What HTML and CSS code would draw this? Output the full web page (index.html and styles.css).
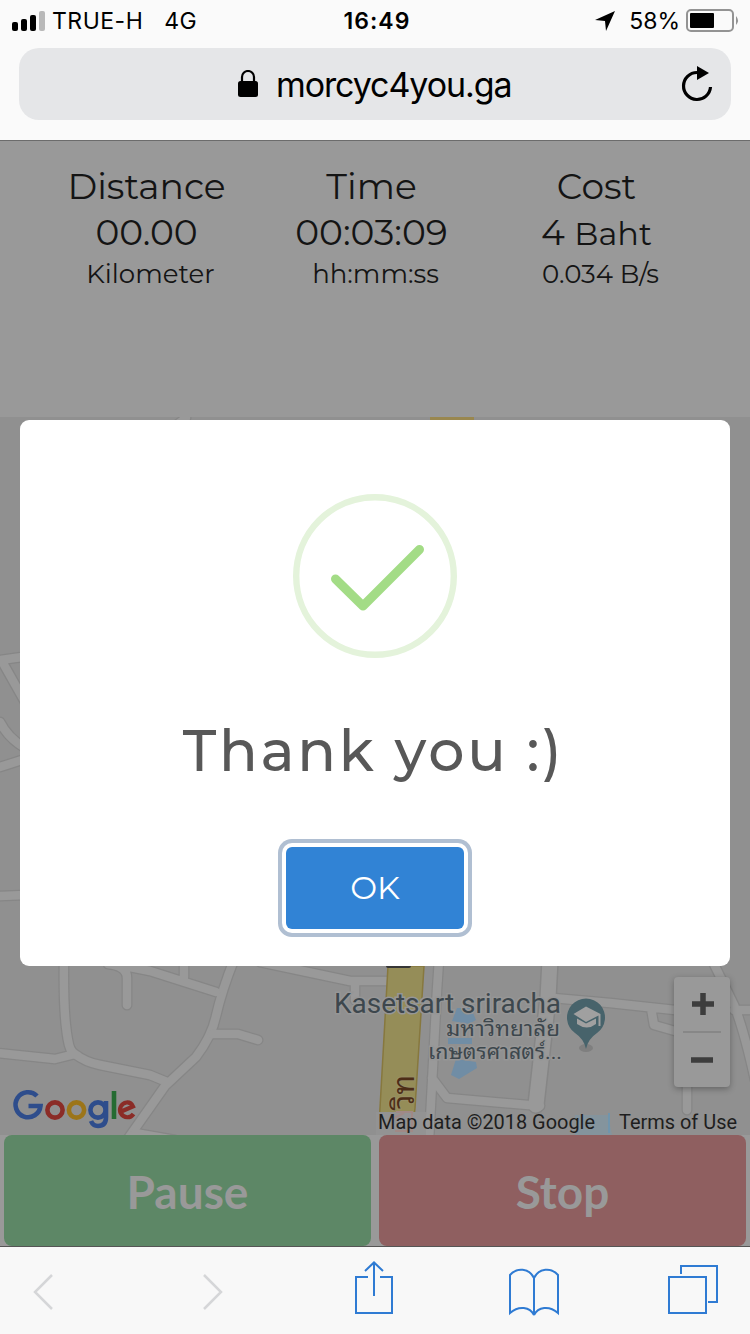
FILE: index.html
```html
<!DOCTYPE html>
<html lang="en">
<head>
<meta charset="utf-8">
<title>morcyc4you.ga</title>
<link rel="stylesheet" href="styles.css">
</head>
<body>
<div class="phone">
  <header class="chrome">
    <div class="status">
      <div class="status-left">
        <svg class="signal" width="34" height="20" viewBox="0 0 34 20"><rect x="0" y="11" width="6" height="9" rx="2"/><rect x="9" y="8" width="6" height="12" rx="2"/><rect x="18" y="4" width="6" height="16" rx="2"/><rect x="27" y="0" width="6" height="20" rx="2" fill="#b9b9b9"/></svg>
        <span class="carrier">TRUE-H</span><span class="network">4G</span>
      </div>
      <div class="clock">16:49</div>
      <div class="status-right">
        <svg width="20" height="20" viewBox="0 0 20 20"><path d="M20 0 11 20 10 10 0 9Z"/></svg>
        <span class="percent">58%</span>
        <svg width="54" height="24" viewBox="0 0 54 24"><rect x="1" y="1" width="46" height="21" rx="4" fill="none" stroke="#939393" stroke-width="2"/><rect x="4" y="4" width="24" height="15" rx="1"/><path d="M50 7q4 4.500 0 9z" fill="#939393"/></svg>
      </div>
    </div>
    <div class="address">
      <svg class="lock" width="20" height="28" viewBox="0 0 20 28"><rect y="11" width="20" height="16" rx="2.500"/><path d="M4 12V7a6 6 0 0 1 12 0v5" fill="none" stroke="#000" stroke-width="2.200"/></svg>
      <span class="host">morcyc4you.ga</span>
      <svg class="reload" width="32" height="36" viewBox="0 0 32 36"><path d="M16 6.500A13.500 13.500 0 1 0 29.500 21" fill="none" stroke="#000" stroke-width="3.200"/><path d="M16 0v14l12-7z"/></svg>
    </div>
  </header>

  <main class="page">
    <section class="stats">
      <div class="stat"><div class="big nudge">Distance</div><div class="big nudge">00.00</div><div class="small">Kilometer</div></div>
      <div class="stat"><div class="big nudge">Time</div><div class="big nudge">00:03:09</div><div class="small">hh:mm:ss</div></div>
      <div class="stat"><div class="big nudge">Cost</div><div class="big nudge">4 <span class="unit">Baht</span></div><div class="small">0.034 B/s</div></div>
    </section>

    <section class="map">
      <svg class="map-canvas" width="750" height="718" viewBox="0 417 750 718">
        <rect y="417" width="750" height="718" fill="#909090"/>
        <defs>
          <g id="roads">
            <path d="M0 660 22 657M3 663 25 702M0 722Q8 738 25 748M0 767 25 759M0 896 25 895M178 424 186 418"/>
            <path d="M64 960Q63 1020 69 1045Q71 1053 78 1056M-2 1053 55 1059 75 1054Q85 1062 100 1065L150 1075 167 1082"/>
            <path d="M234 960Q222 990 216 1016 212 1036 196 1057L165 1086 127 1140"/>
            <path d="M125 966 150 971 216 992M108 964Q127 966 127 978V1005M184 960V977M212 1034H238L258 1040M260 962 350 981H388M355 983V1000M135 1133 175 1140"/>
            <path d="M439 960 437 990 429 1140M432 1078 447 1098 540 1106M553 998 610 1003 675 1010M651 1008 654 1025 675 1031M712 960 734 1005Q744 1030 755 1080M734 1010H755M687 1080V1110"/>
          </g>
          <path id="wide-road" d="M550 960 548 998 536 1105"/>
        </defs>
        <g fill="none" stroke-linecap="round" stroke-linejoin="round">
          <use href="#roads" stroke="#868686" stroke-width="11"/>
          <use href="#wide-road" stroke="#868686" stroke-width="18"/>
          <use href="#roads" stroke="#999" stroke-width="8.500"/>
          <use href="#wide-road" stroke="#999" stroke-width="15"/>
        </g>
        <path d="M430 417h44v4h-44z" fill="#99874f"/>
        <path d="M388 966H424L415 1108 412 1135H378L380 1108Z" fill="#958d58" stroke="#87783e" stroke-width="1.500"/>
        <path d="M376 1112H426V1135H376Z" fill="#939393"/>
        <rect x="386" y="963" width="25" height="5" rx="2" fill="#363636"/>
        <path d="M457 1008h14l5 12-7 4-17-3zM448 1038h24v6h-24zM456 1059l20 3 1 6-18 11-8-4z" fill="#708da5"/>
        <path d="M575 1115h33l4 20h-37z" fill="#84949d"/><path d="M609 1113v20" stroke="#7095ad" stroke-width="2"/>
        <path d="M396 1112h16v20M394 1118l10-5M395 1131h18" fill="none" stroke="#a08986" stroke-width="2"/>
        <g class="poi" fill="#3d474d" stroke="#969696" stroke-width="3" paint-order="stroke" text-anchor="end">
          <text x="561" y="1013" font-size="27" textLength="227" lengthAdjust="spacingAndGlyphs">Kasetsart sriracha</text>
          <text x="560" y="1036" font-size="21" textLength="114" lengthAdjust="spacingAndGlyphs">มหาวิทยาลัย</text>
          <text x="562" y="1059" font-size="21" textLength="134" lengthAdjust="spacingAndGlyphs">เกษตรศาสตร์...</text>
        </g>
        <text class="poi" transform="translate(414 1109) rotate(-90)" font-size="29" fill="#4d2d17" stroke="#989065" stroke-width="2" paint-order="stroke" textLength="34" lengthAdjust="spacingAndGlyphs">วิท</text>
        <ellipse cx="586" cy="1048" rx="7" ry="4" fill="#7f7f7f"/>
        <path d="M586 1049Q584 1039 575 1033A19 19 0 1 1 597 1033Q588 1039 586 1049Z" fill="#47636b"/>
        <path d="M586 1006.500l14.500 7.500v12h-2v-10.500L586 1022l-12.500-8zM577 1018.500l9 5 10-5v5.500q-9 7-19 0z" fill="#a0a0a0"/>
        <g class="poi" font-size="20" fill="#1e1e1e">
          <text x="378" y="1129" textLength="217" lengthAdjust="spacingAndGlyphs">Map data ©2018 Google</text>
          <text x="619" y="1129" textLength="118" lengthAdjust="spacingAndGlyphs">Terms of Use</text>
        </g>
        <g fill="none" stroke-width="4.600">
          <path d="M37 1096A12.500 12.500 0 1 0 40.500 1106H28.500" stroke="#2e4d8c"/>
          <circle cx="55" cy="1110" r="7.600" stroke="#8b2c27"/>
          <circle cx="76.500" cy="1110" r="7.600" stroke="#9c7519"/>
          <circle cx="98" cy="1110" r="7.600" stroke="#2e4d8c"/>
          <path d="M106 1101V1117Q106 1126 98 1126 93 1126 91 1121" stroke="#2e4d8c"/>
          <path d="M114 1091V1119" stroke="#256b32"/>
          <path d="M120 1112 133 1106.500Q131 1102 126.500 1102.500A7.400 7.400 0 1 0 133.500 1114" stroke="#8b2c27" stroke-width="4.200"/>
        </g>
      </svg>
      <div class="zoom-control">
        <svg width="22" height="22" viewBox="0 0 22 22"><path d="M11 0V22M0 11H22" stroke="#3d3d3d" stroke-width="5.500"/></svg>
        <i class="zoom-line"></i>
        <svg width="22" height="22" viewBox="0 0 22 22"><path d="M0 11H22" stroke="#3d3d3d" stroke-width="5.500"/></svg>
      </div>
    </section>

    <div class="actions"><div class="action pause"><span>Pause</span></div><div class="action stop"><span>Stop</span></div></div>

    <section class="modal">
      <svg class="success" width="164" height="164" viewBox="0 0 164 164" fill="none"><circle cx="82" cy="82" r="78.800" stroke="#e4f3db" stroke-width="6.400"/><path d="M42.500 85 70 112 126.500 55.500" stroke="#a3dc86" stroke-width="9" stroke-linecap="round" stroke-linejoin="round"/></svg>
      <h1 class="thanks">Thank you :)</h1>
      <div class="ok">OK</div>
    </section>
  </main>

  <footer class="toolbar">
    <svg class="back" width="22" height="36" viewBox="0 0 22 36"><path d="M20 1 3 18 20 35"/></svg>
    <svg class="forward" width="22" height="36" viewBox="0 0 22 36"><path d="M3 1 20 18 3 35"/></svg>
    <svg class="share" width="40" height="54" viewBox="0 0 40 54"><path d="M14 16H2V52H38V16H26M20 35V2M11 10 20 1.500 29 10"/></svg>
    <svg class="book" width="52" height="50" viewBox="0 0 52 50"><path d="M26 11V48C22 40 11 38 2 46V8C9 0 21 1 26 11C31 1 43 0 50 8V46C41 38 30 40 26 48"/></svg>
    <svg class="tabs" width="50" height="50" viewBox="0 0 50 50"><path d="M1 13H38V49H1ZM13 10V2H49V38H40"/></svg>
  </footer>
</div>
</body>
</html>
```
FILE: styles.css
```css
* { box-sizing: border-box; }
body { margin: 0; }
svg { display: block; flex: none; }
.phone { width: 750px; height: 1334px; overflow: hidden; display: flex; flex-direction: column; font-family: Inter, sans-serif; color: #000; }
.chrome { height: 141px; background: #fafafa; border-bottom: 1px solid #6c6c6c; flex: none; }
.status { height: 48px; padding: 0 10px 6px 12px; display: grid; grid-template-columns: 1fr auto 1fr; align-items: center; font-size: 23px; line-height: 30px; }
.status-left, .status-right { display: flex; align-items: center; }
.status-right { justify-content: flex-end; }
.carrier { margin-left: 6px; letter-spacing: .5px; }
.network { margin-left: 21px; letter-spacing: .5px; }
.clock { font-weight: 600; letter-spacing: 1px; padding-left: 2px; }
.percent { margin: 0 6px 0 14px; }
.address { height: 72px; margin: 0 19px; border-radius: 20px; background: #e5e6e8; display: flex; align-items: center; padding: 0 18px 0 219px; }
.host { margin-left: 18px; padding-top: 1px; font-size: 34px; line-height: 44px; letter-spacing: -1.1px; flex: 1; }
.page { height: 1105px; flex: none; position: relative; background: #999; }
.stats { height: 276px; padding: 22px 37px 0 38px; display: grid; grid-template-columns: repeat(3, 225px); text-align: center; font-family: Montserrat, Lato, sans-serif; color: #141414; }
.big { font-size: 36px; line-height: 46px; height: 46px; white-space: nowrap; }
.nudge { padding-right: 8px; }
.unit { font-size: 32px; line-height: 1; }
.small { font-size: 26px; line-height: 38px; white-space: nowrap; }
.map { height: 718px; position: relative; }
.poi { font-family: Roboto, "Noto Sans Thai Looped", "Noto Sans Thai", Loma, Garuda, sans-serif; }
.zoom-control { position: absolute; left: 674px; top: 560px; width: 56px; height: 110px; border-radius: 4px; background: #999; box-shadow: 0 2px 6px rgba(0, 0, 0, .3); display: flex; flex-direction: column; align-items: center; justify-content: space-between; padding: 16px 0; }
.zoom-control svg:first-child { margin-left: 1px; }
.zoom-line { width: 38px; height: 2px; background: #878787; }
.actions { height: 111px; display: flex; gap: 8px; padding: 0 4px; background: #999; }
.action { flex: 1; border-radius: 8px; display: flex; align-items: center; justify-content: center; padding-top: 2px; font: bold 46px/56px Lato, sans-serif; color: #999; }
.pause { background: #5d8766; }
.stop { background: #8f5f60; }
.modal { position: absolute; left: 20px; top: 279px; width: 710px; height: 546px; border-radius: 9px; background: #fff; display: flex; flex-direction: column; align-items: center; padding-top: 74px; font-family: Montserrat, Lato, sans-serif; }
.thanks { margin: 57px 3px 0 0; height: 72px; font-size: 57px; line-height: 72px; font-weight: 500; letter-spacing: 2.7px; color: #585858; white-space: nowrap; }
.ok { margin-top: 60px; width: 178px; height: 82px; border-radius: 6px; background: #3183d5; color: #fff; font-size: 32px; line-height: 82px; text-align: center; box-shadow: 0 0 0 4px #fff, 0 0 0 8px #b0bfd2; }
.toolbar { height: 88px; background: #f8f8f8; border-top: 1px solid #555; flex: none; display: flex; align-items: flex-start; padding-left: 32px; }
.toolbar path { fill: none; stroke: #2f7bd3; stroke-width: 2; }
.toolbar svg { margin-top: 20px; }
.toolbar .back path, .toolbar .forward path { stroke: #d5d6d8; stroke-width: 2.500; }
.toolbar .back { margin-top: 27px; }
.toolbar .forward { margin: 27px 0 0 147px; }
.toolbar .share { margin: 14px 0 0 131px; }
.toolbar .book { margin-left: 114px; }
.toolbar .tabs { margin: 17px 0 0 108px; }
```
